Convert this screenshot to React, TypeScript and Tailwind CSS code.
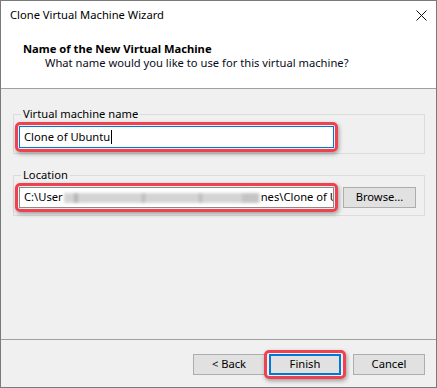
import React from "react";

const font = { fontFamily: '"Noto Sans", "Open Sans", sans-serif' };

const CloseIcon = () => (
  <svg width="11" height="11" viewBox="0 0 11 11" className="block">
    <path d="M0.5 0.5 L10.5 10.5 M10.5 0.5 L0.5 10.5" stroke="#111" strokeWidth="1" />
  </svg>
);

const Highlight = ({ children, className = "" }: { children: React.ReactNode; className?: string }) => (
  <div
    className={`rounded-[5px] border-[3px] border-[#ee4250] shadow-[1px_2px_4px_rgba(0,0,0,0.35)] ${className}`}
  >
    {children}
  </div>
);

const GroupBox = ({ label, children }: { label: string; children: React.ReactNode }) => (
  <fieldset className="mx-[12px] w-[412px] border border-[#dcdcdc] pl-[1px] pr-[1px]">
    <legend className="ml-[6px] px-[2px] text-[11.2px] leading-[16px] text-black">{label}</legend>
    {children}
  </fieldset>
);

const Button = ({ children, primary = false }: { children: React.ReactNode; primary?: boolean }) => (
  <div
    className={`flex h-[21px] w-[72px] items-center justify-center bg-[#e1e1e1] text-[11.2px] text-black ${
      primary ? "border-2 border-[#0078d7]" : "border border-[#adadad]"
    }`}
  >
    {children}
  </div>
);

export default function App() {
  return (
    <div className="flex h-[388px] w-[437px] flex-col border border-[#7a7a7a] bg-[#f0f0f0]" style={font}>
      {/* title bar */}
      <div className="flex h-[29px] items-center justify-between bg-white pl-[9px] pr-[9px]">
        <span className="text-[11.2px] text-black">Clone Virtual Machine Wizard</span>
        <CloseIcon />
      </div>

      {/* header */}
      <div className="h-[59px] border-b border-[#a0a0a0] bg-white pl-[22px] pt-[11px]">
        <div className="text-[11.2px] font-bold leading-[15px] text-black">Name of the New Virtual Machine</div>
        <div className="pl-[22px] text-[11.2px] leading-[14px] text-[#0a0a1a]">
          What name would you like to use for this virtual machine?
        </div>
      </div>

      {/* body */}
      <div className="flex flex-1 flex-col border-b border-[#a0a0a0] pt-[17px]">
        <GroupBox label="Virtual machine name">
          <Highlight className="mb-[1px] w-[323px] p-[1px]">
            <div className="flex h-[22px] items-center border border-[#0078d7] bg-white pl-[4px] text-[11.2px] text-black">
              Clone of Ubuntu
              <span className="ml-[1px] h-[14px] w-px bg-black" />
            </div>
          </Highlight>
        </GroupBox>

        <div className="h-[13px]" />

        <GroupBox label="Location">
          <div className="flex items-center pb-[3px]">
            <Highlight className="w-[323px] p-[1px]">
              <div className="flex h-[21px] items-center overflow-hidden whitespace-nowrap border border-[#8a8a8a] bg-white pl-[4px] text-[11.2px] text-black">
                <span className="shrink-0">C:\User</span>
                <span className="relative mx-[1px] flex h-[10px] w-[196px] shrink-0 bg-[#d4d4d4] blur-[1.6px]">
                  <span className="ml-[10px] h-full w-[4px] bg-[#b4b4b4]" />
                  <span className="ml-[64px] h-full w-[3px] bg-[#bababa]" />
                  <span className="ml-[54px] h-full w-[3px] bg-[#bababa]" />
                  <span className="ml-[40px] h-full w-[16px] bg-[#c4c4c4]" />
                </span>
                <span className="shrink-0">nes\Clone of Ubuntu</span>
              </div>
            </Highlight>
            <div className="ml-[5px]">
              <div className="flex h-[21px] w-[73px] items-center justify-center border border-[#adadad] bg-[#e1e1e1] text-[11.2px] text-black">
                Browse...
              </div>
            </div>
          </div>
        </GroupBox>
      </div>

      {/* footer */}
      <div className="flex h-[47px] items-start justify-end pr-[11px] pt-[14px]">
        <Button>&lt; Back</Button>
        <Highlight className="-my-[4px] ml-[-1px] mr-[7px] px-[2px] py-[1px]">
          <Button primary>Finish</Button>
        </Highlight>
        <Button>Cancel</Button>
      </div>
    </div>
  );
}
